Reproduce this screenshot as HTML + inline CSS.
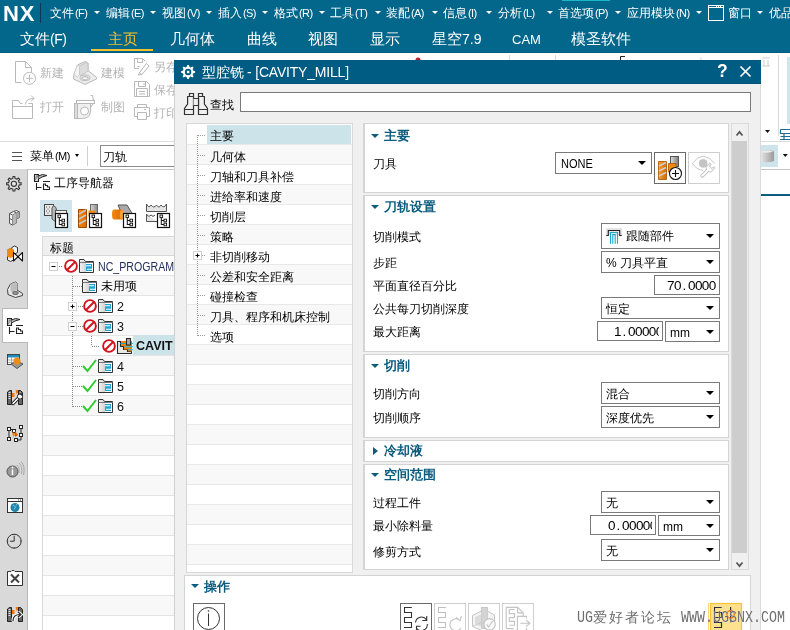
<!DOCTYPE html>
<html><head><meta charset="utf-8">
<style>
*{box-sizing:border-box;margin:0;padding:0}
html,body{width:790px;height:630px;overflow:hidden;background:#fff;will-change:transform;font-family:"Liberation Sans",sans-serif;font-size:12px;color:#000}
.a{position:absolute;white-space:nowrap}
#top{position:absolute;left:0;top:0;width:790px;height:53px;background:#03668b;border-bottom:1px solid #005c80}
.mi{position:absolute;white-space:nowrap;top:5px;color:#fff;font-size:12px;line-height:16px}
.pl{font-size:11px;letter-spacing:-0.6px;margin-left:1px}
.mt{position:absolute;top:11px;width:0;height:0;border-left:3px solid transparent;border-right:3px solid transparent;border-top:3.5px solid #fff}
.tp{font-size:14px;letter-spacing:-0.5px}
.tri{display:inline-block;width:0;height:0;border-left:3.5px solid transparent;border-right:3.5px solid transparent;border-top:4px solid #fff;vertical-align:middle;margin-left:7px}
.tab{position:absolute;white-space:nowrap;top:30px;color:#fff;font-size:14.5px;line-height:18px}
.gt{position:absolute;color:#b4b4b4;font-size:12px;line-height:14px}
.side{position:absolute;left:0;top:169px;width:28px;height:461px;background:#d9d9d9;border-right:1px solid #b9b9b9}
.nrow{position:absolute;left:43px;width:131px;height:20px;border-bottom:1px solid #e4e4e4}
.g{background:#f8f8f8}
.trow{position:absolute;left:187px;width:165px;height:20px;border-bottom:1px solid #e8e8e8}
.tl{position:absolute;left:23px;top:5px;font-size:12px;line-height:14px}
.pn{position:absolute;left:363px;width:366px;background:#fff;border:1px solid #d4d4d4;border-left-width:2px}
.ph{position:absolute;left:384px;color:#0b5c7e;font-weight:bold;font-size:13px;line-height:14px}
.pt{position:absolute;left:371px;width:0;height:0;border-left:4px solid transparent;border-right:4px solid transparent;border-top:4.5px solid #0b5c7e}
.lb{position:absolute;left:373px;font-size:12px;line-height:14px}
.dd{position:absolute;background:#fff;border:1px solid #7a7a7a}
.dd .ar{position:absolute;right:5px;top:50%;margin-top:-2px;width:0;height:0;border-left:4px solid transparent;border-right:4px solid transparent;border-top:4px solid #000}
.dd .tx{position:absolute;left:4px;top:50%;margin-top:-6px;line-height:14px;font-size:12px}
.num{position:absolute;background:#fff;border:1px solid #7a7a7a;font-family:"Liberation Mono",monospace;font-size:12px;line-height:14px;overflow:hidden;text-align:right}
</style></head><body>
<div id="top">
<div class="a" style="left:3px;top:1px;color:#fff;font-weight:bold;font-size:22px;line-height:26px;letter-spacing:0.8px">NX</div>
<div class="a" style="left:40px;top:3px;width:1px;height:20px;background:#0b3a50"></div>
<div class="mi" style="left:50px">文件<span class="pl">(F)</span></div><div class="mt" style="left:94px"></div>
<div class="mi" style="left:106px">编辑<span class="pl">(E)</span></div><div class="mt" style="left:150px"></div>
<div class="mi" style="left:162px">视图<span class="pl">(V)</span></div><div class="mt" style="left:206px"></div>
<div class="mi" style="left:218px">插入<span class="pl">(S)</span></div><div class="mt" style="left:262px"></div>
<div class="mi" style="left:274px">格式<span class="pl">(R)</span></div><div class="mt" style="left:319px"></div>
<div class="mi" style="left:330px">工具<span class="pl">(T)</span></div><div class="mt" style="left:375px"></div>
<div class="mi" style="left:386px">装配<span class="pl">(A)</span></div><div class="mt" style="left:432px"></div>
<div class="mi" style="left:443px">信息<span class="pl">(I)</span></div><div class="mt" style="left:486px"></div>
<div class="mi" style="left:498px">分析<span class="pl">(L)</span></div><div class="mt" style="left:547px"></div>
<div class="mi" style="left:558px">首选项<span class="pl">(P)</span></div><div class="mt" style="left:615px"></div>
<div class="mi" style="left:627px">应用模块<span class="pl">(N)</span></div><div class="mt" style="left:696px"></div>
<svg class="a" style="left:700px;top:0" width="30" height="26" fill="none"><rect x="8.5" y="5.5" width="15" height="15" stroke="#fff"/><path d="M8.5 7.5H23.5M16 6.5h1M18 6.5h1M20 6.5h1" stroke="#fff"/></svg>
<div class="mi" style="left:728px">窗口</div><div class="mt" style="left:757px"></div>
<div class="mi" style="left:769px">优品</div>
<div class="tab" style="left:20px;">文件<span class="tp">(F)</span></div>
<div class="tab" style="left:108px;color:#f5c030">主页</div>
<div class="tab" style="left:170px;">几何体</div>
<div class="tab" style="left:247px;">曲线</div>
<div class="tab" style="left:308px;">视图</div>
<div class="tab" style="left:370px;">显示</div>
<div class="tab" style="left:432px;">星空<span style="font-size:14px">7.9</span></div>
<div class="tab" style="left:512px;"><span style="font-size:13px">CAM</span></div>
<div class="tab" style="left:571px;">模圣软件</div>
<div class="a" style="left:91px;top:49px;width:62px;height:2px;background:#f5c030"></div>
</div>
<!-- toolbar -->
<svg class="a" style="left:0;top:0" width="790" height="630" viewBox="0 0 790 630" fill="none" stroke="#b9b9b9" stroke-width="1">
<path d="M15.5 82.5V61.5H25.5L31.5 67.5V72.5M25.5 61.5V67.5H31.5M15.5 82.5H21.5"/>
<circle cx="29.5" cy="78.3" r="6"/><path d="M26 78.3H33M29.5 74.8V81.8"/>
<path d="M74 74 L77.5 65 L85 61.5 L88 63 L88 70.5 L96.5 77.3 L96.5 79 L85 84.5 L73.5 79 Z" fill="#ececec"/>
<path d="M79.5 66 L86 62.5 L88 63 L88 71 L81 75.5 L79.5 74.5 Z" fill="#dcdcdc" stroke="#c4c4c4"/><path d="M74 74L77.5 65L79.5 66V75L77 77Z" fill="#f4f4f4" stroke="#c8c8c8" stroke-width=".8"/>
<ellipse cx="85" cy="77.8" rx="5" ry="2.8" fill="#e0e0e0" stroke="#c0c0c0"/><ellipse cx="85" cy="78.3" rx="3" ry="1.6" fill="#fafafa"/>
<path d="M12.5 118.5V100.5H18.5Q19.5 103.5 21 103.5H22.5M28.5 103.5H32.5V118.5H12.5M12.5 106.5H32.5"/>
<path d="M25.5 104.5Q25.5 98.5 34 98.5M31 95.5L34 98.5L31 101.5"/>
<path d="M74.5 103.5H90.5V110.5Q90.5 118.5 82.5 118.5H74.5Z" fill="#f0f0f0"/>
<rect x="74.5" y="103.5" width="3" height="15" fill="#dcdcdc"/>
<rect x="76.5" y="100.5" width="18" height="3" fill="#fff"/>
<path d="M90.5 95.5H92.5L93.5 100.5M90.5 103.5V107.5L93.5 103.5" />
<circle cx="84.5" cy="111" r="4" fill="#fff"/>
<path d="M134.5 68.5V58.5H142.5L145 61M134.5 68.5H139M137.5 58.5V62.5H142.5V58.5M137.5 66.5H139.5"/>
<path d="M139.5 72.5L146.5 63.5L149 66L142 74.5Z M139.5 72.5L138.5 75L142 74.5"/>
<path d="M134.5 81.5H146.5L149.5 84.5V96.5H134.5Z M138.5 81.5V86.5H145.5V81.5 M144 83V85 M136.5 96.5V88.5H147.5V96.5 M139 91.5H145 M139 94H145"/>
<path d="M137.5 107.5V104.5H146.5V107.5 M137.5 116.5H134.5V107.5H149.5V116.5H146.5 M137.5 112.5H146.5V119.5H137.5Z M144 109.5H146"/>
</svg>
<div class="gt" style="left:40px;top:66px">新建</div>
<div class="gt" style="left:101px;top:66px">建模</div>
<div class="gt" style="left:154px;top:60px">另存</div>
<div class="gt" style="left:40px;top:100px">打开</div>
<div class="gt" style="left:101px;top:100px">制图</div>
<div class="gt" style="left:154px;top:83px">保存</div>
<div class="gt" style="left:154px;top:106px">打印</div>
<div class="a" style="left:0;top:141px;width:790px;height:1px;background:#dcdcdc"></div>
<svg class="a" style="left:0;top:0" width="790" height="630" viewBox="0 0 790 630" fill="none">
<circle cx="418" cy="60" r="2.5" fill="#c0202b"/>
<path d="M509.5 55V60M555.5 55V60M701 57V60M778.5 55V136" stroke="#d8d8d8"/>
<path d="M620.5 60V56.5H625" stroke="#222"/>
<rect x="787" y="57" width="3" height="67" fill="#cfe6ed"/><rect x="562" y="0" width="48" height="1" fill="#19b5c9"/>
<path d="M762 58H770M764 60V66M768 60V66M762 66H770" stroke="#c8c8c8" stroke-width=".9"/>
<path d="M765 130H770L767.5 133Z" fill="#111"/>
<path d="M780.5 129.5H790M780.5 129.5V133.5H790M780.5 136.5H790M784 133.5V139.5M780 139.5H790" stroke="#1a6e92" stroke-width="1.2"/>
<rect x="761" y="145" width="17" height="22" fill="#cde4ec"/>
<path d="M761 152Q766 148 774 151V161Q767 163.5 761 161Z" fill="url(#cyl)"/>
<path d="M761 152Q766 149 774 151Q768 154 761 152Z" fill="#ececec"/>
<path d="M782.8 154H787.8L785.3 157Z" fill="#111"/>
<rect x="761" y="194" width="29" height="2" fill="#0b5c7e"/>
<defs><linearGradient id="cyl" x1="0" y1="0" x2="1" y2="0"><stop offset="0" stop-color="#e4e4e4"/><stop offset="1" stop-color="#9a9a9a"/></linearGradient></defs>
</svg>

<!-- menu row -->
<div class="a" style="left:30px;top:149px;font-size:12px;line-height:14px">菜单<span class="pl">(M)</span></div><div class="a" style="left:75px;top:154px;width:0;height:0;border-left:2.5px solid transparent;border-right:2.5px solid transparent;border-top:3px solid #000"></div>
<div class="a" style="left:87px;top:146px;width:1px;height:20px;background:#d0d0d0"></div>
<div class="a" style="left:100px;top:145px;width:100px;height:22px;border:1px solid #8a8a8a;background:#fff"></div>
<div class="a" style="left:103px;top:150px;font-size:12px;line-height:14px">刀轨</div>
<div class="a" style="left:0;top:169px;width:790px;height:1px;background:#c4c4c4"></div>
<!-- sidebar -->
<div class="side"></div>
<div class="a" style="left:2px;top:308px;width:26px;height:35px;background:#fff;border:1px solid #b9b9b9;border-right:none"></div>
<!-- navigator -->
<div class="a" style="left:28px;top:170px;width:147px;height:460px;background:#fff;border-right:1px solid #d8d8d8"></div>
<div class="a" style="left:54px;top:176px;font-size:12px;line-height:14px">工序导航器</div>
<div class="a" style="left:40px;top:200px;width:32px;height:32px;background:#cfe4eb"></div>
<div class="a" style="left:42px;top:236px;width:133px;height:400px;border:1px solid #d8d8d8;border-right:none"></div>
<div class="a" style="left:43px;top:237px;width:131px;height:18px;background:#f0f0f0"></div><div class="a" style="left:50px;top:241px;font-size:12px;line-height:14px">标题</div>
<div class="a" style="left:43px;top:255px;width:131px;height:1px;background:#d8d8d8"></div>
<div class="nrow" style="top:256px"></div>
<div class="nrow g" style="top:276px"></div>
<div class="nrow" style="top:296px"></div>
<div class="nrow g" style="top:316px"></div>
<div class="nrow" style="top:336px"></div>
<div class="nrow g" style="top:356px"></div>
<div class="nrow" style="top:376px"></div>
<div class="nrow g" style="top:396px"></div>
<div class="nrow" style="top:416px"></div>
<div class="nrow g" style="top:436px"></div>
<div class="nrow" style="top:456px"></div>
<div class="nrow g" style="top:476px"></div>
<div class="nrow" style="top:496px"></div>
<div class="nrow g" style="top:516px"></div>
<div class="nrow" style="top:536px"></div>
<div class="nrow g" style="top:556px"></div>
<div class="nrow" style="top:576px"></div>
<div class="nrow g" style="top:596px"></div>
<div class="nrow" style="top:616px"></div>

<div class="a" style="left:133px;top:335px;width:41px;height:20px;background:#cde3ea"></div>
<div class="a" style="left:98px;top:260px;font-size:12.5px;line-height:14px;color:#1c2a5a;transform:scaleX(.85);transform-origin:0 0">NC_PROGRAM</div>
<div class="a" style="left:101px;top:279px;font-size:12px;line-height:14px">未用项</div>
<div class="a" style="left:117px;top:300px;font-size:12.5px;line-height:14px;color:#111">2</div>
<div class="a" style="left:117px;top:320px;font-size:12.5px;line-height:14px;color:#111">3</div>
<div class="a" style="left:136px;top:339px;font-size:12.5px;line-height:14px;font-weight:bold;color:#111">CAVIT</div>
<div class="a" style="left:117px;top:360px;font-size:12.5px;line-height:14px;color:#111">4</div>
<div class="a" style="left:117px;top:380px;font-size:12.5px;line-height:14px;color:#111">5</div>
<div class="a" style="left:117px;top:400px;font-size:12.5px;line-height:14px;color:#111">6</div>


<svg class="a" style="left:0;top:0" width="790" height="630" viewBox="0 0 790 630" fill="none">
<defs><linearGradient id="fg" x1="0" y1="0" x2="1" y2="0"><stop offset="0" stop-color="#f4f4f4"/><stop offset=".45" stop-color="#d4d4d4"/><stop offset=".5" stop-color="#fff"/><stop offset="1" stop-color="#fff"/></linearGradient>
<linearGradient id="og" x1="0" y1="0" x2="1" y2="0"><stop offset="0" stop-color="#f08a10"/><stop offset="1" stop-color="#e06800"/></linearGradient>
<linearGradient id="gg" x1="0" y1="0" x2="1" y2="0"><stop offset="0" stop-color="#d8d8d8"/><stop offset="1" stop-color="#8a8a8a"/></linearGradient></defs>
<path d="M12 152.5H22M12 156.5H22M12 160.5H22" stroke="#555"/>
<g transform="translate(27 -144)"><path d="M7.5 318.5H11.5V325.5H7.5Z" fill="#d8d8d8" stroke="#222" stroke-width="1.1"/><path d="M8 324L11 320M8.5 321.5L10.5 319" stroke="#666" stroke-width=".8"/><path d="M11.5 320L15.5 318.5L20 319.5L15 321L11.5 323" fill="#bbb" stroke="#222" stroke-width="1"/><path d="M9.5 327V334M9.5 331.5H14.5M16 325.5H23" stroke="#222" stroke-width="1.1"/><path d="M16.5 328V333.5H22.5V331L20.5 331V329.5H18.5V328Z" fill="#fff" stroke="#222" stroke-width="1.1"/></g>

<rect x="44.5" y="204.5" width="9" height="11" fill="#e8e8e8" stroke="#444"/>
<path d="M46 207h1M49 207h1M47.5 209h1M46 211h1M49 211h1M47.5 213h1" stroke="#555"/>
<path d="M53.5 205.5Q57 207 56.5 211V222.5L52 219V208Z" fill="#bbb" stroke="#555"/>
<rect x="55.5" y="210.5" width="11" height="6" fill="#f4f4f4" stroke="#555"/>
<rect x="55.5" y="213.5" width="12" height="14" fill="#fff" stroke="#111" stroke-width="1.2"/><path d="M59.3 217.5V225.0M59.3 220.5H62.0M59.3 224.5H62.0" stroke="#111"/><rect x="58.0" y="215.0" width="2.6" height="2.6" fill="#fff" stroke="#111" stroke-width=".9"/><rect x="62.0" y="219.2" width="2.6" height="2.6" fill="#fff" stroke="#111" stroke-width=".9"/><rect x="62.0" y="223.2" width="2.6" height="2.6" fill="#fff" stroke="#111" stroke-width=".9"/>
<rect x="90.5" y="204.5" width="7" height="10" fill="url(#gg)" stroke="#666"/>
<path d="M78.5 209.5H86.5V227.5H78.5Z" fill="url(#og)" stroke="#a04800"/>
<path d="M79 214L86 210M79 219L86 215M79 224L86 220" stroke="#c8c8c8" stroke-width="1.6"/>
<rect x="88.5" y="210.5" width="7" height="6" fill="#f08a10"/>
<rect x="89.5" y="213.5" width="12" height="14" fill="#fff" stroke="#111" stroke-width="1.2"/><path d="M93.3 217.5V225.0M93.3 220.5H96.0M93.3 224.5H96.0" stroke="#111"/><rect x="92.0" y="215.0" width="2.6" height="2.6" fill="#fff" stroke="#111" stroke-width=".9"/><rect x="96.0" y="219.2" width="2.6" height="2.6" fill="#fff" stroke="#111" stroke-width=".9"/><rect x="96.0" y="223.2" width="2.6" height="2.6" fill="#fff" stroke="#111" stroke-width=".9"/>
<path d="M118 205H127L135 218L127 226L118 205Z" fill="#aaa" stroke="#555"/>
<path d="M114 209.5H122V219.5H114Q112 219.5 112 214.5Q112 209.5 114 209.5Z" fill="url(#og)"/>
<ellipse cx="122" cy="214.5" rx="2.2" ry="5" fill="#f5a030"/>
<rect x="123.5" y="213.5" width="12" height="14" fill="#fff" stroke="#111" stroke-width="1.2"/><path d="M127.3 217.5V225.0M127.3 220.5H130.0M127.3 224.5H130.0" stroke="#111"/><rect x="126.0" y="215.0" width="2.6" height="2.6" fill="#fff" stroke="#111" stroke-width=".9"/><rect x="130.0" y="219.2" width="2.6" height="2.6" fill="#fff" stroke="#111" stroke-width=".9"/><rect x="130.0" y="223.2" width="2.6" height="2.6" fill="#fff" stroke="#111" stroke-width=".9"/>
<path d="M146.5 204V211.5H166.5V204Q164 209 161 205Q159 209 156.5 205Q154 209 151 205Q149 209 146.5 204" fill="#e4e4e4" stroke="#555"/>
<path d="M146.5 214V221.5H157M146.5 214Q148.5 218 151 215Q153 218 155 215" fill="#e4e4e4" stroke="#555"/>
<rect x="157.5" y="213.5" width="12" height="14" fill="#fff" stroke="#111" stroke-width="1.2"/><path d="M161.3 217.5V225.0M161.3 220.5H164.0M161.3 224.5H164.0" stroke="#111"/><rect x="160.0" y="215.0" width="2.6" height="2.6" fill="#fff" stroke="#111" stroke-width=".9"/><rect x="164.0" y="219.2" width="2.6" height="2.6" fill="#fff" stroke="#111" stroke-width=".9"/><rect x="164.0" y="223.2" width="2.6" height="2.6" fill="#fff" stroke="#111" stroke-width=".9"/>
<rect x="49.5" y="262.5" width="8" height="8" fill="#fff" stroke="#cfcfcf"/><path d="M51.5 266.5H55.5" stroke="#000"/>
<path d="M59 266.5H63" stroke="#777" stroke-dasharray="1 1"/>
<circle cx="71" cy="266" r="5.9" stroke="#d4121b" stroke-width="1.9" fill="none"/><path d="M75 262L67 270" stroke="#d4121b" stroke-width="1.9"/>
<defs></defs><path d="M79.5 272.5V259.5H84L85.5 261.5H93.5V272.5Z" fill="url(#fg)" stroke="#333"/><path d="M79.5 262.5H93.5" stroke="#777"/><rect x="86.0" y="264.0" width="6" height="7" fill="#1fa6d6"/><path d="M86.0 265.8H91.0M87.0 269.3H92.0" stroke="#fff" stroke-width="1.1"/>
<path d="M72.5 276V407" stroke="#888" stroke-dasharray="1 1"/>
<path d="M73 286.5H82M91.5 336V346M92 346.5H100M73 366.5H82M73 386.5H82M73 406.5H82" stroke="#888" stroke-dasharray="1 1"/>
<path d="M78 306.5H83M78 326.5H83" stroke="#888" stroke-dasharray="1 1"/>
<defs></defs><path d="M82.5 292.5V279.5H87L88.5 281.5H96.5V292.5Z" fill="url(#fg)" stroke="#333"/><path d="M82.5 282.5H96.5" stroke="#777"/><rect x="89.0" y="284.0" width="6" height="7" fill="#1fa6d6"/><path d="M89.0 285.8H94.0M90.0 289.3H95.0" stroke="#fff" stroke-width="1.1"/>
<rect x="68.5" y="302.5" width="8" height="8" fill="#fff" stroke="#cfcfcf"/><path d="M70.5 306.5H74.5M72.5 304.5V308.5" stroke="#000"/>
<circle cx="90" cy="306" r="5.9" stroke="#d4121b" stroke-width="1.9" fill="none"/><path d="M94 302L86 310" stroke="#d4121b" stroke-width="1.9"/>
<defs></defs><path d="M98.5 312.5V299.5H103L104.5 301.5H112.5V312.5Z" fill="url(#fg)" stroke="#333"/><path d="M98.5 302.5H112.5" stroke="#777"/><rect x="105.0" y="304.0" width="6" height="7" fill="#1fa6d6"/><path d="M105.0 305.8H110.0M106.0 309.3H111.0" stroke="#fff" stroke-width="1.1"/>
<rect x="68.5" y="322.5" width="8" height="8" fill="#fff" stroke="#cfcfcf"/><path d="M70.5 326.5H74.5" stroke="#000"/>
<circle cx="90" cy="326" r="5.9" stroke="#d4121b" stroke-width="1.9" fill="none"/><path d="M94 322L86 330" stroke="#d4121b" stroke-width="1.9"/>
<defs></defs><path d="M98.5 332.5V319.5H103L104.5 321.5H112.5V332.5Z" fill="url(#fg)" stroke="#333"/><path d="M98.5 322.5H112.5" stroke="#777"/><rect x="105.0" y="324.0" width="6" height="7" fill="#1fa6d6"/><path d="M105.0 325.8H110.0M106.0 329.3H111.0" stroke="#fff" stroke-width="1.1"/>
<circle cx="109" cy="346" r="5.9" stroke="#d4121b" stroke-width="1.9" fill="none"/><path d="M113 342L105 350" stroke="#d4121b" stroke-width="1.9"/>
<path d="M117.5 353.5V341.5H120.5V346.5H123.5V349.5H127.5V351.5H131.5V353.5Z" fill="#e8e8e8" stroke="#2a2a2a" stroke-width="1.1"/><rect x="121" y="341" width="11" height="5" fill="#f57f00"/><rect x="124" y="346.5" width="8" height="3" fill="#f57f00"/><rect x="128" y="349.8" width="4" height="1.6" fill="#f57f00"/><path d="M120.5 343.5H133M124 346.8H133M128 349.8H133" stroke="#12a8d8" stroke-width="1"/><rect x="126.5" y="338.5" width="4" height="6.5" fill="#aaa" stroke="#2a2a2a" stroke-width="1.1"/>



<path d="M83 366L87.5 371L96 360" stroke="#2dcc2d" stroke-width="2" fill="none"/>
<defs></defs><path d="M98.5 372.5V359.5H103L104.5 361.5H112.5V372.5Z" fill="url(#fg)" stroke="#333"/><path d="M98.5 362.5H112.5" stroke="#777"/><rect x="105.0" y="364.0" width="6" height="7" fill="#1fa6d6"/><path d="M105.0 365.8H110.0M106.0 369.3H111.0" stroke="#fff" stroke-width="1.1"/>
<path d="M83 386L87.5 391L96 380" stroke="#2dcc2d" stroke-width="2" fill="none"/>
<defs></defs><path d="M98.5 392.5V379.5H103L104.5 381.5H112.5V392.5Z" fill="url(#fg)" stroke="#333"/><path d="M98.5 382.5H112.5" stroke="#777"/><rect x="105.0" y="384.0" width="6" height="7" fill="#1fa6d6"/><path d="M105.0 385.8H110.0M106.0 389.3H111.0" stroke="#fff" stroke-width="1.1"/>
<path d="M83 406L87.5 411L96 400" stroke="#2dcc2d" stroke-width="2" fill="none"/>
<defs></defs><path d="M98.5 412.5V399.5H103L104.5 401.5H112.5V412.5Z" fill="url(#fg)" stroke="#333"/><path d="M98.5 402.5H112.5" stroke="#777"/><rect x="105.0" y="404.0" width="6" height="7" fill="#1fa6d6"/><path d="M105.0 405.8H110.0M106.0 409.3H111.0" stroke="#fff" stroke-width="1.1"/>
<path d="M12.83 178.51 L12.95 176.56 L14.85 176.56 L14.97 178.51 L15.95 178.81 L16.88 179.30 L18.35 178.01 L19.69 179.35 L18.40 180.82 L18.88 181.72 L19.19 182.73 L21.14 182.85 L21.14 184.75 L19.19 184.87 L18.89 185.85 L18.40 186.78 L19.69 188.25 L18.35 189.59 L16.88 188.30 L15.98 188.78 L14.97 189.09 L14.85 191.04 L12.95 191.04 L12.83 189.09 L11.85 188.79 L10.92 188.30 L9.45 189.59 L8.11 188.25 L9.40 186.78 L8.92 185.88 L8.61 184.87 L6.66 184.75 L6.66 182.85 L8.61 182.73 L8.91 181.75 L9.40 180.82 L8.11 179.35 L9.45 178.01 L10.92 179.30 L11.82 178.82Z" fill="#dedede" stroke="#333" stroke-width="1.1" stroke-linejoin="round"/><circle cx="13.9" cy="183.8" r="2.6" fill="#e4e4e4" stroke="#333" stroke-width="1.1"/><path d="M9.5 213.5L13.5 211.5L16.5 210.5L19.5 212V217.5L16.5 219V223L12.5 225L9.5 223.5Z" fill="#f2f2f2" stroke="#555" stroke-width="1"/><path d="M9.5 213.5L12.5 215L16.5 213L19.5 212M12.5 215V225M9.5 218.5L12.5 220L16.5 218M13.5 211.5L16.5 213V219" stroke="#555" stroke-width=".9" fill="none"/><path d="M12.5 215L16.5 213V223L12.5 225Z" fill="#b8b8b8"/><path d="M16.5 213L19.5 212V217.5L16.5 219Z" fill="#a8a8a8"/><path d="M11.8 247.5L14.5 246L17.5 247.5V252.5L14.5 254L11.8 252.5Z" fill="#f4f4f4" stroke="#333" stroke-width="1"/><path d="M7.5 250L10.5 248.5L13.5 250V260L10.5 261.5L7.5 260Z" fill="#f0f0f0" stroke="#333" stroke-width="1"/><path d="M7 249.8L10.5 248L13.8 249.8V256.5L10.5 258L7 256.5Z" fill="#f28a12"/><path d="M13.5 252.5L22.5 261V252.5L13.5 261Z" fill="#fff" stroke="#111" stroke-width="1.1" stroke-linejoin="round"/><circle cx="18" cy="256.8" r="1" fill="#111"/><path d="M7.5 289.5L10.5 284L15.5 282L17 283V290L22.5 293.5V295.5L15.5 297.5L8 294.5Z" fill="#e6e6e6" stroke="#444" stroke-width="1"/><path d="M10.5 284L15.5 282L17 283V290L12 292.5L10.5 291Z" fill="#bdbdbd"/><ellipse cx="15.5" cy="293" rx="2.8" ry="1.5" fill="#999" stroke="#444" stroke-width=".8"/>
<g transform="translate(0 0)"><path d="M7.5 318.5H11.5V325.5H7.5Z" fill="#d8d8d8" stroke="#222" stroke-width="1.1"/><path d="M8 324L11 320M8.5 321.5L10.5 319" stroke="#666" stroke-width=".8"/><path d="M11.5 320L15.5 318.5L20 319.5L15 321L11.5 323" fill="#bbb" stroke="#222" stroke-width="1"/><path d="M9.5 327V334M9.5 331.5H14.5M16 325.5H23" stroke="#222" stroke-width="1.1"/><path d="M16.5 328V333.5H22.5V331L20.5 331V329.5H18.5V328Z" fill="#fff" stroke="#222" stroke-width="1.1"/></g>
<rect x="7.5" y="354.5" width="12" height="10" fill="#fff" stroke="#444"/><rect x="8" y="355" width="11" height="2.5" fill="#1f8fc0"/>
<path d="M8 360H19M8 362.5H19M11.5 357V364.5" stroke="#999" stroke-width=".8"/>
<path d="M11 364L17 361L23 364L17 368.5Z" fill="#999" stroke="#555"/>
<circle cx="17" cy="361" r="3.5" fill="#f08a10"/>
<path d="M7.5 404.5V392L9.5 390.5H11.5V404.5ZM18.5 404.5V390.5H20.5L22.5 392.5V404.5Z" fill="#666" stroke="#222"/><path d="M8.5 392.5H10.5M8.5 394.5H10.5M8.5 396.5H10.5M8.5 398.5H10.5M19.5 393H21M19.5 399H21" stroke="#eee" stroke-width=".9"/><path d="M12 393H14.5V397H12ZM15.5 390H18V393L16.5 394Z" fill="#f07a10"/><path d="M13 403.5L19.5 397" stroke="#222" stroke-width="3.4" stroke-linecap="round"/><path d="M13 403.5L19.5 397" stroke="#fff" stroke-width="1.6" stroke-linecap="round"/><circle cx="20" cy="396.5" r="2.6" fill="#fff" stroke="#222" stroke-width="1"/><path d="M20.5 393.5L22.5 395.5" stroke="#222" stroke-width="1.3"/>

<g stroke="#222" fill="#fff"><rect x="7.5" y="427.5" width="3" height="3"/><rect x="12.5" y="429.5" width="3" height="3"/><rect x="7.5" y="437.5" width="3" height="3"/><rect x="19.5" y="425.5" width="3" height="3"/><rect x="19.5" y="433.5" width="3" height="3"/><rect x="14.5" y="438.5" width="3" height="3"/></g>
<path d="M9 430.5V437.5M10.5 429.5H12.5M21 428.5V433.5M17.5 440H21V436.5" stroke="#222"/>
<path d="M12 432L16 434L13 437Z" fill="#f08a10"/><path d="M15 431L18 435L15 437Z" fill="#e05a00"/>
<circle cx="12.5" cy="471.5" r="5.5" fill="#999" stroke="#555"/><path d="M12.5 469.5V475" stroke="#fff" stroke-width="1.5"/><circle cx="12.5" cy="467.5" r=".9" fill="#fff"/>
<path d="M17 465Q20 468 19 473M19 463Q23 467 21.5 474M21 461.5Q25.5 466 23.5 475" stroke="#999" stroke-width=".8"/>
<rect x="7.5" y="498.5" width="15" height="14" fill="#fff" stroke="#333"/><path d="M7.5 501.5H22.5" stroke="#333"/><path d="M18 500h1M20 500h1" stroke="#333"/>
<circle cx="15" cy="507.5" r="4.5" fill="#1f85ad"/><path d="M13 505L15.5 507L14 509.5M16 505.5L17 504" stroke="#8fd0e8" stroke-width=".9"/>
<circle cx="14.2" cy="541.2" r="7" stroke="#333"/><path d="M14.2 536V541.2H10" stroke="#333"/><path d="M14.2 534.2V535.2M14.2 547.2V548.2M7.2 541.2H8.2M20.2 541.2H21.2" stroke="#333"/>
<path d="M7.5 585.5V571.5H11L12 570.5H14L15 571.5H22.5V585.5Z" fill="#fff" stroke="#333"/>
<path d="M11 574.5L19 582.5M19 574.5L11 582.5" stroke="#444" stroke-width="2"/>
<path d="M7.5 621.5V609L9.5 607.5H11.5V621.5ZM18.5 621.5V607.5H20.5L22.5 609.5V621.5Z" fill="#666" stroke="#222"/><path d="M8.5 609.5H10.5M8.5 611.5H10.5M8.5 613.5H10.5M8.5 615.5H10.5" stroke="#eee" stroke-width=".9"/><path d="M12 610H14.5V614H12ZM15.5 607H18V610L16.5 611Z" fill="#f07a10"/><path d="M13 621Q13 614.5 20 614.5M18 612L21 614.5L18 617" stroke="#fff" stroke-width="3.2"/><path d="M13 621Q13 614.5 20 614.5M18 612L21 614.5L18 617" stroke="#222" stroke-width="1.2"/>

</svg>
<div class="a" style="left:174px;top:60px;width:587px;height:570px;background:#f0f0f0;border-left:1px solid #d0d0d0;border-right:1px solid #dadada"></div>
<div class="a" style="left:174px;top:60px;width:587px;height:24px;background:#005c83;border-bottom:1px solid #00557a"></div>
<div class="a" style="left:202px;top:64px;font-size:14px;line-height:17px;color:#fff;letter-spacing:-0.2px">型腔铣 - [CAVITY_MILL]</div>
<div class="a" style="left:717px;top:62px;font-size:17.5px;line-height:19px;color:#fff;font-weight:bold">?</div>
<div class="a" style="left:210px;top:98px;font-size:12px;line-height:14px">查找</div>
<div class="a" style="left:240px;top:92px;width:511px;height:20px;background:#fff;border:1px solid #7a7a7a"></div>
<div class="a" style="left:186px;top:123px;width:167px;height:450px;background:#fff;border:1px solid #d8d8d8"></div>

<div class="trow" style="top:125px"><div class="tl">主要</div></div>
<div class="trow g" style="top:145px"><div class="tl">几何体</div></div>
<div class="trow" style="top:165px"><div class="tl">刀轴和刀具补偿</div></div>
<div class="trow g" style="top:185px"><div class="tl">进给率和速度</div></div>
<div class="trow" style="top:205px"><div class="tl">切削层</div></div>
<div class="trow g" style="top:225px"><div class="tl">策略</div></div>
<div class="trow" style="top:245px"><div class="tl">非切削移动</div></div>
<div class="trow g" style="top:265px"><div class="tl">公差和安全距离</div></div>
<div class="trow" style="top:285px"><div class="tl">碰撞检查</div></div>
<div class="trow g" style="top:305px"><div class="tl">刀具、程序和机床控制</div></div>
<div class="trow" style="top:325px"><div class="tl">选项</div></div>
<div class="trow g" style="top:345px"></div>
<div class="trow" style="top:365px"></div>
<div class="trow g" style="top:385px"></div>
<div class="trow" style="top:405px"></div>
<div class="trow g" style="top:425px"></div>
<div class="trow" style="top:445px"></div>
<div class="trow g" style="top:465px"></div>
<div class="trow" style="top:485px"></div>
<div class="trow g" style="top:505px"></div>
<div class="trow" style="top:525px"></div>
<div class="trow g" style="top:545px"></div>
<div class="a" style="left:207px;top:125px;width:144px;height:19px;background:#cde3ea"></div><div class="a" style="left:210px;top:129px;font-size:12px;line-height:14px">主要</div>

<div class="pn" style="top:123px;height:70px"></div>
<div class="pn" style="top:195px;height:157px"></div>
<div class="pn" style="top:354px;height:84px"></div>
<div class="pn" style="top:440px;height:22px"></div>
<div class="pn" style="top:464px;height:106px"></div>
<div class="pt" style="top:134px"></div><div class="ph" style="top:129px">主要</div>
<div class="lb" style="top:157px">刀具</div>
<div class="dd" style="left:555px;top:152px;width:97px;height:22px"><div class="tx" style="left:5px;font-size:12.7px;transform:scaleX(.87);transform-origin:0 0;margin-top:-6px">NONE</div><div class="ar"></div></div>


<div class="pt" style="top:205px"></div><div class="ph" style="top:200px">刀轨设置</div>
<div class="lb" style="top:230px">切削模式</div>
<div class="lb" style="top:256px">步距</div>
<div class="lb" style="top:279px">平面直径百分比</div>
<div class="lb" style="top:302px">公共每刀切削深度</div>
<div class="lb" style="top:325px">最大距离</div>
<div class="dd" style="left:601px;top:223px;width:119px;height:26px"><div class="tx" style="left:24px;margin-top:-7px">跟随部件</div><div class="ar"></div></div>
<div class="dd" style="left:601px;top:251px;width:119px;height:22px"><div class="tx" style="left:4px">% 刀具平直</div><div class="ar"></div></div>
<div class="a" style="left:654px;top:275px;width:66px;height:20px;background:#fff;border:1px solid #7a7a7a"><div class="a" style="left:0;top:0;width:61px;height:18px;overflow:hidden"><span class="a" style="left:12px;top:3px;font-family:'Liberation Sans',sans-serif;font-size:13.5px;letter-spacing:-0.55px;line-height:13px">70<span style="display:inline-block;width:7px;text-align:center;letter-spacing:0">.</span>00000</span></div></div>
<div class="dd" style="left:601px;top:297px;width:119px;height:22px"><div class="tx" style="left:4px">恒定</div><div class="ar"></div></div>
<div class="a" style="left:597px;top:321px;width:66px;height:20px;background:#fff;border:1px solid #7a7a7a"><div class="a" style="left:0;top:0;width:61px;height:18px;overflow:hidden"><span class="a" style="left:16px;top:3px;font-family:'Liberation Sans',sans-serif;font-size:13.5px;letter-spacing:-0.55px;line-height:13px">1<span style="display:inline-block;width:7px;text-align:center;letter-spacing:0">.</span>00000</span></div></div>
<div class="dd" style="left:665px;top:321px;width:55px;height:21px"><div class="tx" style="left:4px">mm</div><div class="ar"></div></div>
<div class="pt" style="top:364px"></div><div class="ph" style="top:359px">切削</div>
<div class="lb" style="top:387px">切削方向</div>
<div class="lb" style="top:411px">切削顺序</div>
<div class="dd" style="left:601px;top:382px;width:119px;height:22px"><div class="tx" style="left:4px">混合</div><div class="ar"></div></div>
<div class="dd" style="left:601px;top:406px;width:119px;height:22px"><div class="tx" style="left:4px">深度优先</div><div class="ar"></div></div>
<div class="a" style="left:373px;top:447px;width:0;height:0;border-top:4px solid transparent;border-bottom:4px solid transparent;border-left:5px solid #0b5c7e"></div><div class="ph" style="top:444px">冷却液</div>
<div class="pt" style="top:473px"></div><div class="ph" style="top:468px">空间范围</div>
<div class="lb" style="top:496px">过程工件</div>
<div class="lb" style="top:519px">最小除料量</div>
<div class="lb" style="top:545px">修剪方式</div>
<div class="dd" style="left:601px;top:491px;width:119px;height:22px"><div class="tx" style="left:4px">无</div><div class="ar"></div></div>
<div class="a" style="left:590px;top:515px;width:66px;height:20px;background:#fff;border:1px solid #7a7a7a"><div class="a" style="left:0;top:0;width:61px;height:18px;overflow:hidden"><span class="a" style="left:17px;top:3px;font-family:'Liberation Sans',sans-serif;font-size:13.5px;letter-spacing:-0.55px;line-height:13px">0<span style="display:inline-block;width:7px;text-align:center;letter-spacing:0">.</span>00000</span></div></div>
<div class="dd" style="left:658px;top:515px;width:62px;height:21px"><div class="tx" style="left:4px">mm</div><div class="ar"></div></div>
<div class="dd" style="left:601px;top:539px;width:119px;height:22px"><div class="tx" style="left:4px">无</div><div class="ar"></div></div>
<div class="a" style="left:731px;top:123px;width:18px;height:447px;background:#f0f0f0;border:1px solid #dadada"></div>
<div class="a" style="left:732px;top:141px;width:15px;height:412px;background:#cdcdcd"></div>
<div class="a" style="left:184px;top:575px;width:567px;height:60px;background:#fff;border:1px solid #d4d4d4"></div>
<div class="pt" style="left:191px;top:584px"></div><div class="ph" style="left:204px;top:580px">操作</div>






<svg class="a" style="left:0;top:0" width="790" height="630" viewBox="0 0 790 630" fill="none">
<defs><linearGradient id="og2" x1="0" y1="0" x2="1" y2="0"><stop offset="0" stop-color="#f5a030"/><stop offset="1" stop-color="#d86a00"/></linearGradient>
<linearGradient id="gg2" x1="0" y1="0" x2="1" y2="0"><stop offset="0" stop-color="#e0e0e0"/><stop offset="1" stop-color="#7a7a7a"/></linearGradient></defs>
<polygon points="187.41,65.03 188.79,65.03 189.61,67.02 190.55,67.41 192.54,66.59 193.51,67.56 192.69,69.55 193.08,70.49 195.07,71.31 195.07,72.69 193.08,73.51 192.69,74.45 193.51,76.44 192.54,77.41 190.55,76.59 189.61,76.98 188.79,78.97 187.41,78.97 186.59,76.98 185.65,76.59 183.66,77.41 182.69,76.44 183.51,74.45 183.12,73.51 181.13,72.69 181.13,71.31 183.12,70.49 183.51,69.55 182.69,67.56 183.66,66.59 185.65,67.41 186.59,67.02" fill="#fff"/><circle cx="188.1" cy="72" r="3.2" fill="#005c83"/><rect x="186.9" y="70.8" width="2.4" height="2.4" fill="#fff"/>
<path d="M740.5 66.5L750.5 76.5M750.5 66.5L740.5 76.5" stroke="#fff" stroke-width="1.7"/>
<g stroke="#333" stroke-width="1.2" fill="#f0f0f0"><path d="M189.5 96.5V93.5H193.5V96.5"/><path d="M198.5 96.5V93.5H202.5V96.5"/>
<path d="M187.6 96.5H193.5V114.5H184.5V108.5L187.6 104Z"/><path d="M204.4 96.5H198.5V114.5H207.5V108.5L204.4 104Z"/>
<path d="M193.5 98.5H198.5V105.5H193.5"/><path d="M184.5 109.5H193.5M198.5 109.5H207.5"/></g>
<path d="M197.5 135V336M198 135.5H206M198 155.5H206M198 175.5H206M198 195.5H206M198 215.5H206M198 235.5H206M198 275.5H206M198 295.5H206M198 315.5H206M198 335.5H206M202 255.5H206" stroke="#999" stroke-dasharray="1 1"/>
<rect x="193.5" y="251.5" width="8" height="8" fill="#fff" stroke="#cfcfcf"/><path d="M195.5 255.5H199.5M197.5 253.5V257.5" stroke="#000"/>
<rect x="654.5" y="152.5" width="31" height="31" fill="#fff" stroke="#6a6a6a"/>
<rect x="688.5" y="152.5" width="31" height="31" fill="#fff" stroke="#cfcfcf"/>
<rect x="670.5" y="156.5" width="8" height="10" fill="url(#gg2)" stroke="#555"/>
<path d="M658.5 161.5H666.5V179.5H658.5Z" fill="url(#og2)" stroke="#a85000" stroke-width=".8"/>
<path d="M659 166L666 162.5M659 171L666 167.5M659 176L666 172.5" stroke="#d0d0d0" stroke-width="1.5"/>
<path d="M668.5 163.5H676V170L671 172H668.5Z" fill="#f08a10" stroke="#a85000" stroke-width=".8"/>
<circle cx="675.5" cy="173.5" r="6" fill="#fff" stroke="#111" stroke-width="1.1"/><path d="M672 173.5H679M675.5 170V177" stroke="#111" stroke-width="1.1"/>
<path d="M692.3 163.4Q703.2 149 714.8 163.4M692.3 163.4Q697 170 703 170.3" stroke="#c8c8c8" stroke-width="1"/><circle cx="703.2" cy="163.4" r="4.3" fill="#c4c4c4"/><g transform="rotate(-45 706 172)"><path d="M700.5 170.5H708.5A2 2 0 0 1 711 168.5H715V170.3H712.5V173.7H715V175.5H711A2 2 0 0 1 708.5 173.5H700.5A1.5 1.5 0 0 1 700.5 170.5Z" fill="#fff" stroke="#c8c8c8" stroke-width="1"/></g><circle cx="702.8" cy="176.3" r=".6" fill="#c4c4c4"/>

<rect x="606" y="228" width="16" height="7" fill="#e4e4e4"/>
<path d="M606.2 235.5H608.3V230.5H619.7V235.5H621.8" stroke="#222" stroke-width="1.1"/>
<path d="M610.5 243.7V232.5H617.5V243.7M612.8 243.7V234.6H615.2V243.7" stroke="#1ca8d6" stroke-width="1.1"/>
<path d="M736.5 135.5L739.5 132L742.5 135.5" stroke="#555" stroke-width="1.8"/>
<path d="M736.5 562.5L739.5 566L742.5 562.5" stroke="#555" stroke-width="1.8"/>
<rect x="193.5" y="603.5" width="31" height="40" stroke="#6a6a6a"/><circle cx="208.5" cy="618.5" r="11" stroke="#333" stroke-width="1"/><path d="M208.5 613.5V626" stroke="#333"/><circle cx="208.5" cy="611" r=".8" fill="#333"/>
<rect x="400.5" y="603.5" width="31" height="40" stroke="#6a6a6a"/><rect x="434.5" y="603.5" width="31" height="40" stroke="#cfcfcf"/><rect x="468.5" y="603.5" width="31" height="40" stroke="#cfcfcf"/><rect x="502.5" y="603.5" width="31" height="40" stroke="#cfcfcf"/><path d="M411.8 607.5H404.5V612.5H411.5V617.5H404.5V622.5H411.5V627.5H404" stroke="#333" stroke-width="1.1"/>
<path d="M415.5 622.5A6 6 0 0 1 426.5 619.8M426.7 616V620.5H422.3M427.3 624A6 6 0 0 1 416.8 628.5M416.5 630V626.3H420.6" stroke="#333" stroke-width="1.1"/>
<path d="M445.8 607.5H438.5V612.5H445.5V617.5H438.5V622.5H445.5V627.5H438" stroke="#c0c0c0" stroke-width="1.1"/>
<path d="M459.5 620A6 6 0 1 0 461 628M456 617.5L460 620.5L461.5 616" stroke="#c4c4c4" stroke-width="1.1"/>
<path d="M472.5 615.5L481.5 611V607.5H487.5V611L494.5 615V627L485 632L472.5 626.5Z" fill="#f4f4f4" stroke="#c4c4c4"/><path d="M475 617L481.5 614V627L475 624Z" fill="#dcdcdc"/><rect x="481.5" y="607.5" width="6" height="21" fill="#d4d4d4" stroke="#c8c8c8" stroke-width=".8"/><path d="M472.5 626.5L481.5 622.5L494.5 627" stroke="#c8c8c8" stroke-width=".8"/><circle cx="489.6" cy="624.3" r="5.7" fill="#fafafa" stroke="#c4c4c4" stroke-width="1.1"/><path d="M486.6 624.3L488.6 627L492.6 621" stroke="#c4c4c4" stroke-width="1.1"/>

<path d="M506.2 628.6V607.4H517.6L523.3 612.9V616.2M517.6 607.4V612.9H523.3M506.2 628.6H513.6" stroke="#c4c4c4" stroke-width="1.1"/><path d="M514.5 609.5H509.3V613.6H514.5V617.6H509.3V621.4H514.5V625.2H509.3" stroke="#c4c4c4" stroke-width="1.1"/><path d="M517.4 630V616.4H526.4V618.5M526.4 628V630M520.2 623.3H529.8M526.2 620.1L529.8 623.3L526.2 626.5" stroke="#c4c4c4" stroke-width="1.1"/>

<rect x="708" y="603" width="1" height="27" fill="#fcd778"/>
<rect x="710.5" y="603.5" width="31" height="30" fill="#fde18e" stroke="#f9c23c" stroke-width="1.2"/>
<path d="M721.7 607.5H714.5V612.5H721.5V617.5H714.5V622.5H721.5V627.5H714" stroke="#2a3040" stroke-width="1.2"/><path d="M730.6 607V622.3" stroke="#2a3040" stroke-width="1.2"/><circle cx="730.6" cy="614.4" r="3.7" stroke="#f07010" stroke-width="1.3"/>
</svg>
<div class="a" style="left:577px;top:609px;font-family:'Liberation Mono',monospace;font-size:17px;line-height:18px;color:#6e6e6e;transform:scaleX(.784);transform-origin:0 0;text-shadow:0 0 1px #fff">UG</div><div class="a" style="left:593px;top:609px;font-family:'Liberation Serif',serif;font-size:14px;letter-spacing:2px;line-height:18px;color:#6e6e6e;text-shadow:0 0 1px #fff">爱好者论坛</div><div class="a" style="left:681px;top:609px;font-family:'Liberation Mono',monospace;font-size:17px;line-height:18px;color:#6e6e6e;transform:scaleX(.784);transform-origin:0 0;text-shadow:0 0 1px #fff">WWW.UGSNX.COM</div>

</body></html>
